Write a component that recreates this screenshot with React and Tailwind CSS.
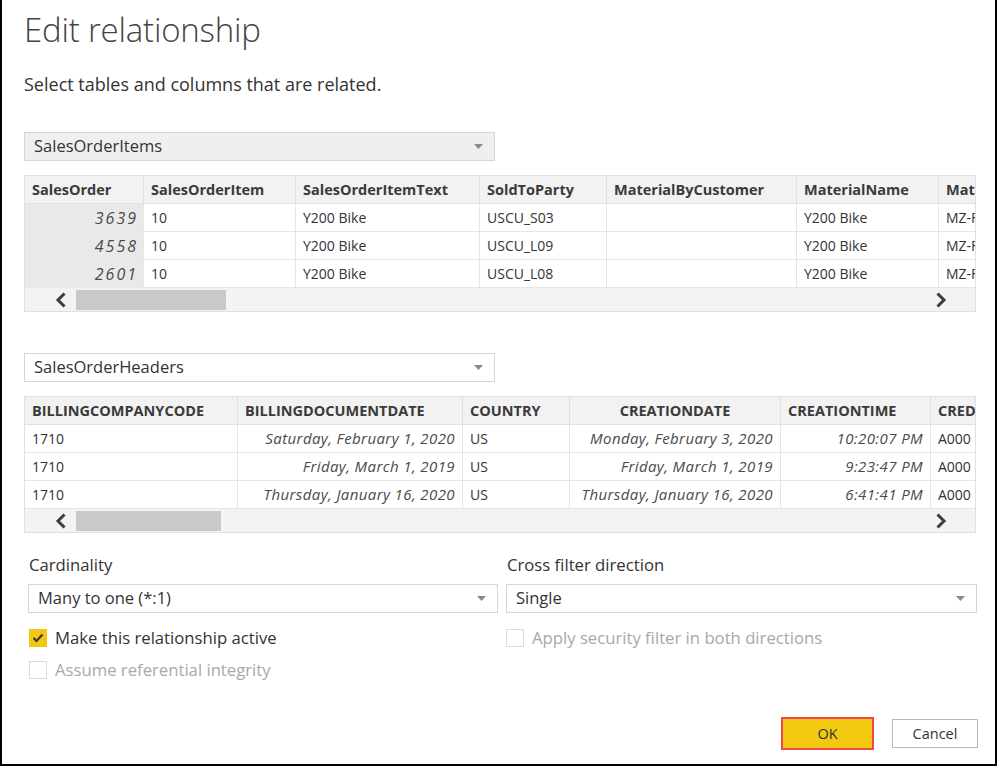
import React from "react";

const font = { fontFamily: '"Open Sans", "Noto Sans", "Liberation Sans", sans-serif' };

function Caret() {
  return (
    <svg width="9" height="5" viewBox="0 0 9 5" className="shrink-0">
      <path d="M0 0 L9 0 L4.5 5 Z" fill="#8a8a8a" />
    </svg>
  );
}

function Chevron({ dir }) {
  return (
    <svg width="12" height="16" viewBox="0 0 12 16">
      {dir === "left" ? (
        <path d="M9.5 1.5 L3 8 L9.5 14.5" fill="none" stroke="#3d3d3d" strokeWidth="3" />
      ) : (
        <path d="M2.5 1.5 L9 8 L2.5 14.5" fill="none" stroke="#3d3d3d" strokeWidth="3" />
      )}
    </svg>
  );
}

function Select({ label, gray, className = "" }) {
  return (
    <div
      className={`flex items-center justify-between h-[29px] border border-[#d6d6d6] pl-[9px] pr-[11px] text-[16.5px] text-[#333] ${gray ? "bg-[#efefef]" : "bg-white"} ${className}`}
    >
      <span>{label}</span>
      <Caret />
    </div>
  );
}

function DataTable({ cols, rows, thumbWidth, firstGray }) {
  return (
    <div className="w-[952px] border border-[#e0e0e0] overflow-hidden bg-white">
      <div className="flex h-[28px] bg-[#f2f2f2] border-b border-[#e0e0e0]">
        {cols.map((c, i) => (
          <div
            key={i}
            style={{ width: c.w }}
            className={`shrink-0 flex items-center px-[7px] text-[14.5px] font-bold text-[#3a3a3a] whitespace-nowrap overflow-hidden ${i < cols.length - 1 ? "border-r border-[#e0e0e0]" : ""} ${c.hc ? "justify-center" : ""}`}
          >
            {c.h}
          </div>
        ))}
      </div>
      {rows.map((r, ri) => (
        <div key={ri} className="flex h-[28px] border-b border-[#e6e6e6]">
          {r.map((v, i) => {
            const c = cols[i];
            return (
              <div
                key={i}
                style={{ width: c.w }}
                className={`shrink-0 flex items-center px-[7px] text-[14px] text-[#333] whitespace-nowrap overflow-hidden ${i < cols.length - 1 ? "border-r border-[#e6e6e6]" : ""} ${c.right ? "justify-end" : ""} ${firstGray && i === 0 ? "bg-[#e9e9e9]" : ""}`}
              >
                {c.num ? (
                  <span className="italic text-[16px] tracking-[2px] text-[#4a4a4a] -mr-[2px]">{v}</span>
                ) : c.right ? (
                  <span className="italic text-[15px] tracking-[0.4px] text-[#4a4a4a]">{v}</span>
                ) : (
                  v
                )}
              </div>
            );
          })}
        </div>
      ))}
      <div className="flex items-center h-[23px] bg-[#f3f3f3]">
        <div className="w-[51px] flex justify-end pr-[9px]">
          <Chevron dir="left" />
        </div>
        <div style={{ width: thumbWidth }} className="h-[20px] bg-[#c9c9c9]" />
        <div className="flex-1" />
        <div className="w-[40px] flex justify-start">
          <Chevron dir="right" />
        </div>
      </div>
    </div>
  );
}

function Check({ checked, label, disabled }) {
  return (
    <div className="flex items-center gap-[8px] h-[20px]">
      {checked ? (
        <div className="w-[18px] h-[18px] bg-[#f2c811] flex items-center justify-center">
          <svg width="12" height="10" viewBox="0 0 12 10">
            <path d="M1.5 5 L4.5 8 L10.5 1.5" fill="none" stroke="#333" strokeWidth="2" />
          </svg>
        </div>
      ) : (
        <div className="w-[18px] h-[18px] border border-[#dcdcdc] bg-white" />
      )}
      <span className={`text-[16.7px] ${disabled ? "text-[#a8a8a8]" : "text-[#333]"}`}>{label}</span>
    </div>
  );
}

export default function App() {
  const cols1 = [
    { h: "SalesOrder", w: 119, right: true, num: true },
    { h: "SalesOrderItem", w: 152 },
    { h: "SalesOrderItemText", w: 184 },
    { h: "SoldToParty", w: 127 },
    { h: "MaterialByCustomer", w: 190 },
    { h: "MaterialName", w: 142 },
    { h: "MaterialByCustomerName", w: 60 },
  ];
  const rows1 = [
    ["3639", "10", "Y200 Bike", "USCU_S03", "", "Y200 Bike", "MZ-FG-Y200"],
    ["4558", "10", "Y200 Bike", "USCU_L09", "", "Y200 Bike", "MZ-FG-Y200"],
    ["2601", "10", "Y200 Bike", "USCU_L08", "", "Y200 Bike", "MZ-FG-Y200"],
  ];
  const cols2 = [
    { h: "BILLINGCOMPANYCODE", w: 213 },
    { h: "BILLINGDOCUMENTDATE", w: 225, right: true },
    { h: "COUNTRY", w: 107 },
    { h: "CREATIONDATE", w: 211, right: true, hc: true },
    { h: "CREATIONTIME", w: 150, right: true },
    { h: "CREDITCONTROLAREA", w: 60 },
  ];
  const rows2 = [
    ["1710", "Saturday, February 1, 2020", "US", "Monday, February 3, 2020", "10:20:07 PM", "A000"],
    ["1710", "Friday, March 1, 2019", "US", "Friday, March 1, 2019", "9:23:47 PM", "A000"],
    ["1710", "Thursday, January 16, 2020", "US", "Thursday, January 16, 2020", "6:41:41 PM", "A000"],
  ];

  return (
    <div style={font} className="w-[997px] h-[766px] bg-white border-l-2 border-r-2 border-b-2 border-black flex flex-col pl-[22px] overflow-hidden">
      <div className="mt-[7px] h-[46px] flex items-center text-[33px] font-light text-[#444] tracking-[-0.2px]">
        Edit relationship
      </div>
      <div className="mt-[19px] h-[24px] flex items-center text-[18px] text-[#333]">
        Select tables and columns that are related.
      </div>
      <Select label="SalesOrderItems" gray className="mt-[36px] w-[471px]" />
      <div className="mt-[14px]">
        <DataTable cols={cols1} rows={rows1} thumbWidth={150} firstGray />
      </div>
      <Select label="SalesOrderHeaders" className="mt-[41px] w-[471px]" />
      <div className="mt-[14px]">
        <DataTable cols={cols2} rows={rows2} thumbWidth={145} />
      </div>
      <div className="mt-[21px] flex pl-[4px] gap-[8px]">
        <div className="w-[470px] flex flex-col">
          <div className="h-[22px] flex items-center pl-[1px] text-[16.7px] text-[#333]">Cardinality</div>
          <Select label="Many to one (*:1)" className="mt-[8px] w-[470px] h-[28px]" />
          <div className="mt-[15px] pl-[1px]">
            <Check checked label="Make this relationship active" />
          </div>
          <div className="mt-[12px] pl-[1px]">
            <Check label="Assume referential integrity" disabled />
          </div>
        </div>
        <div className="w-[471px] flex flex-col">
          <div className="h-[22px] flex items-center pl-[1px] text-[16.7px] text-[#333]">Cross filter direction</div>
          <Select label="Single" className="mt-[8px] w-[471px] h-[28px]" />
          <div className="mt-[15px]">
            <Check label="Apply security filter in both directions" disabled />
          </div>
        </div>
      </div>
      <div className="flex-1" />
      <div className="flex items-center justify-end pr-[17px] mb-[14px] gap-[18px]">
        <div className="w-[93px] h-[33px] bg-[#f2c811] border-2 border-[#f0454a] flex items-center justify-center text-[14.5px] text-[#333]">
          OK
        </div>
        <div className="w-[86px] h-[29px] bg-white border border-[#b8b8b8] flex items-center justify-center text-[14.5px] text-[#333]">
          Cancel
        </div>
      </div>
    </div>
  );
}
